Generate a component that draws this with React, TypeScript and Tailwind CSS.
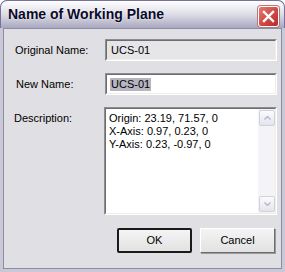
import React from 'react';

const font = { fontFamily: '"Liberation Sans", Arial, sans-serif' };

function Sunken({ children, className }: { children: React.ReactNode; className?: string }) {
  return (
    <div className={`border border-t-[#8c8c94] border-l-[#8c8c94] border-b-[#ffffff] border-r-[#ffffff] ${className ?? ''}`}>
      <div className="h-full border border-t-[#6e6e6e] border-l-[#6e6e6e] border-b-[#f1efe2] border-r-[#f1efe2]">
        {children}
      </div>
    </div>
  );
}

function ScrollArrow({ up }: { up?: boolean }) {
  return (
    <div className="flex h-[16px] w-[16px] items-center justify-center rounded-[2px] border border-[#d0d1de] bg-gradient-to-b from-[#fbfbfd] to-[#e4e4ee]">
      <svg width="7" height="4" viewBox="0 0 7 4">
        <path d={up ? 'M0.5 3.5 L3.5 0.5 L6.5 3.5' : 'M0.5 0.5 L3.5 3.5 L6.5 0.5'} fill="none" stroke="#b9bacb" strokeWidth="1.5" />
      </svg>
    </div>
  );
}

export default function App() {
  return (
    <div
      className="flex h-[272px] w-[285px] flex-col overflow-hidden rounded-t-[7px] bg-[#8584a4]"
      style={font}
    >
      <div className="relative flex h-[28px] shrink-0 items-center rounded-t-[7px] border-x border-t border-[#75739a] bg-gradient-to-b from-[#ffffff] via-[#dcdce6] to-[#a9a8c0] pl-[7px]">
        <span className="text-[14px] font-bold text-[#0a0a28] [text-shadow:0_0_2px_#ffffff]">
          Name of Working Plane
        </span>
        <div className="absolute right-[5px] top-[5px] flex h-[21px] w-[21px] items-center justify-center rounded-[3px] border border-[#ffffff] bg-gradient-to-br from-[#e57a73] via-[#d34b46] to-[#b22a2a] shadow-[0_0_0_1px_#b07a80]">
          <svg width="13" height="13" viewBox="0 0 13 13">
            <path d="M2 2 L11 11 M11 2 L2 11" stroke="#ffffff" strokeWidth="2.4" strokeLinecap="square" />
          </svg>
        </div>
      </div>
      <div className="flex flex-1 border-[3px] border-t-0 border-[#c9c8d6] bg-[#c9c8d6]">
        <div className="flex flex-1 flex-col border border-[#8d8ca7] bg-[#e0dfe3] pl-[9px] pr-[4px] pt-[10px] text-[11px] text-[#000]">
          <div className="flex items-center">
            <span className="w-[92px] pl-[2px]">Original Name:</span>
            <Sunken className="h-[22px] w-[172px]">
              <div className="flex h-full items-center bg-[#e6e5e8] pl-[4px]">UCS-01</div>
            </Sunken>
          </div>
          <div className="mt-[12px] flex items-center">
            <span className="w-[92px] pl-[3px]">New Name:</span>
            <Sunken className="h-[22px] w-[172px]">
              <div className="flex h-full items-center bg-[#ffffff] pl-[3px]">
                <span className="bg-[#b6b5c1] px-[1px] leading-[13px]">UCS-01</span>
              </div>
            </Sunken>
          </div>
          <div className="mt-[12px] flex">
            <span className="w-[91px] pl-[1px] pt-[3px]">Description:</span>
            <Sunken className="h-[108px] w-[173px]">
              <div className="flex h-full bg-[#ffffff]">
                <div className="flex-1 pl-[3px] pt-[3px] leading-[13px]">
                  <div>Origin: 23.19, 71.57, 0</div>
                  <div>X-Axis: 0.97, 0.23, 0</div>
                  <div>Y-Axis: 0.23, -0.97, 0</div>
                </div>
                <div className="flex w-[17px] flex-col justify-between bg-[#f4f4f8] py-[1px] pl-[1px]">
                  <ScrollArrow up />
                  <ScrollArrow />
                </div>
              </div>
            </Sunken>
          </div>
          <div className="mt-[13px] flex justify-end gap-[8px] pr-[2px]">
            <button className="h-[25px] w-[75px] rounded-[2px] border-2 border-[#1a1a1a] bg-gradient-to-b from-[#f4f4f4] to-[#e2e2e2] text-[11px]">
              OK
            </button>
            <button className="h-[25px] w-[75px] border border-t-[#ffffff] border-l-[#ffffff] border-b-[#6e6e6e] border-r-[#6e6e6e] bg-gradient-to-b from-[#f4f4f4] to-[#e2e2e2] text-[11px] shadow-[1px_1px_0_#9a9a9a]">
              Cancel
            </button>
          </div>
        </div>
      </div>
    </div>
  );
}
